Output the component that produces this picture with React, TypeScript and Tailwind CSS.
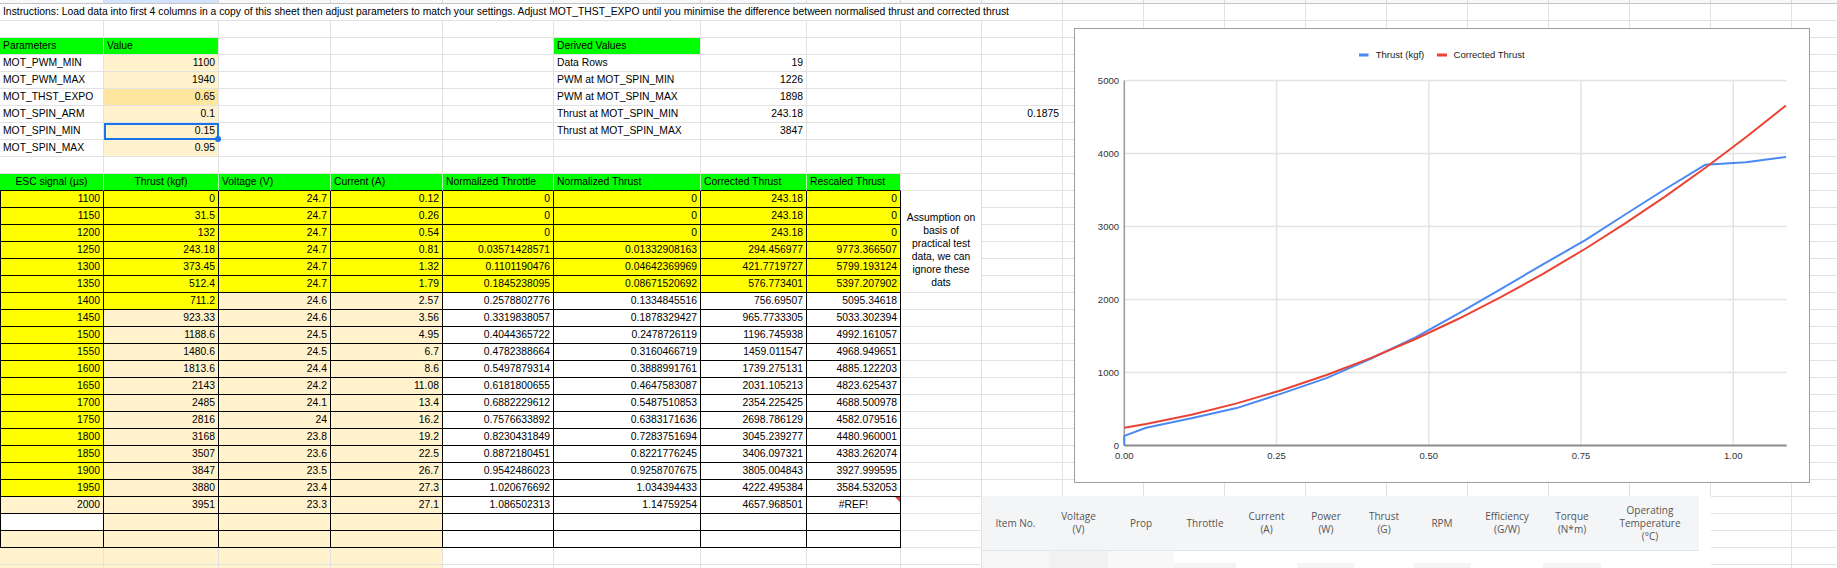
import React from 'react';

type Spec = {
  t?: React.ReactNode;
  a?: 'l' | 'r' | 'c';
  bg?: string;
  b?: string;
  extra?: string;
  child?: React.ReactNode;
};

const GL = 'border-[#e2e2e2]';
const BLK = 'border-black';
const Y = 'bg-[#ffff00]';
const BE = 'bg-[#fff2cc]';
const G = 'bg-[#00ff00]';
const HB = 'border-r-[#b4f3b4] border-b-black';

const INSTR =
  'Instructions: Load data into first 4 columns in a copy of this sheet then adjust parameters to match your settings. Adjust MOT_THST_EXPO until you minimise the difference between normalised thrust and corrected thrust';

const DATA: string[][] = [
  ['1100', '0', '24.7', '0.12', '0', '0', '243.18', '0'],
  ['1150', '31.5', '24.7', '0.26', '0', '0', '243.18', '0'],
  ['1200', '132', '24.7', '0.54', '0', '0', '243.18', '0'],
  ['1250', '243.18', '24.7', '0.81', '0.03571428571', '0.01332908163', '294.456977', '9773.366507'],
  ['1300', '373.45', '24.7', '1.32', '0.1101190476', '0.04642369969', '421.7719727', '5799.193124'],
  ['1350', '512.4', '24.7', '1.79', '0.1845238095', '0.08671520692', '576.773401', '5397.207902'],
  ['1400', '711.2', '24.6', '2.57', '0.2578802776', '0.1334845516', '756.69507', '5095.34618'],
  ['1450', '923.33', '24.6', '3.56', '0.3319838057', '0.1878329427', '965.7733305', '5033.302394'],
  ['1500', '1188.6', '24.5', '4.95', '0.4044365722', '0.2478726119', '1196.745938', '4992.161057'],
  ['1550', '1480.6', '24.5', '6.7', '0.4782388664', '0.3160466719', '1459.011547', '4968.949651'],
  ['1600', '1813.6', '24.4', '8.6', '0.5497879314', '0.3888991761', '1739.275131', '4885.122203'],
  ['1650', '2143', '24.2', '11.08', '0.6181800655', '0.4647583087', '2031.105213', '4823.625437'],
  ['1700', '2485', '24.1', '13.4', '0.6882229612', '0.5487510853', '2354.225425', '4688.500978'],
  ['1750', '2816', '24', '16.2', '0.7576633892', '0.6383171636', '2698.786129', '4582.079516'],
  ['1800', '3168', '23.8', '19.2', '0.8230431849', '0.7283751694', '3045.239277', '4480.960001'],
  ['1850', '3507', '23.6', '22.5', '0.8872180451', '0.8221776245', '3406.097321', '4383.262074'],
  ['1900', '3847', '23.5', '26.7', '0.9542486023', '0.9258707675', '3805.004843', '3927.999595'],
  ['1950', '3880', '23.4', '27.3', '1.020676692', '1.034394433', '4222.495384', '3584.532053'],
  ['2000', '3951', '23.3', '27.1', '1.086502313', '1.14759254', '4657.968501', '#REF!'],
];

function cell(s: Spec, key: string) {
  const align = s.a === 'r' ? 'text-right' : s.a === 'c' ? 'text-center' : 'text-left';
  return (
    <div
      key={key}
      className={[
        'relative whitespace-nowrap px-[3px] leading-[16px] border-r border-b',
        s.b ?? GL,
        s.bg ?? '',
        align,
        s.extra ?? '',
      ].join(' ')}
    >
      {s.t}
      {s.child}
    </div>
  );
}

function pad(cells: Spec[], n: number) {
  const out = [...cells];
  while (out.length < n) out.push({});
  return out;
}

function Selection() {
  return (
    <div className="absolute left-0 top-0 -right-[1px] -bottom-[1px] z-10 border-2 border-[#1a73e8]">
      <div className="absolute -right-[4px] -bottom-[4px] h-[6px] w-[6px] rounded-full bg-[#1a73e8]" />
    </div>
  );
}

function RefFlag() {
  return (
    <div className="absolute right-0 top-0 h-0 w-0 border-l-[5px] border-t-[5px] border-l-transparent border-t-[#e53935]" />
  );
}

function buildSheet() {
  const items: React.ReactNode[] = [];
  let r = 0;
  const push = (cells: Spec[]) => {
    cells.forEach((c, i) => items.push(cell(c, `r${r}c${i}`)));
    r++;
  };

  for (let i = 0; i < 20; i++) {
    items.push(
      <div
        key={`h${i}`}
        className={[
          'border-r border-b border-r-[#dadada] border-b-[#c4c4c4]',
          i === 1 ? 'bg-[#d3e3fd]' : 'bg-[#f8f9fa]',
        ].join(' ')}
      />
    );
  }

  push(pad([{ t: INSTR, extra: 'col-span-10' }], 11));
  push(pad([], 20));
  push(pad([{ t: 'Parameters', bg: G }, { t: 'Value', bg: G }, {}, {}, {}, { t: 'Derived Values', bg: G }], 20));
  push(pad([{ t: 'MOT_PWM_MIN' }, { t: '1100', a: 'r', bg: BE }, {}, {}, {}, { t: 'Data Rows' }, { t: '19', a: 'r' }], 20));
  push(pad([{ t: 'MOT_PWM_MAX' }, { t: '1940', a: 'r', bg: BE }, {}, {}, {}, { t: 'PWM at MOT_SPIN_MIN' }, { t: '1226', a: 'r' }], 20));
  push(pad([{ t: 'MOT_THST_EXPO' }, { t: '0.65', a: 'r', bg: 'bg-[#ffe69f]' }, {}, {}, {}, { t: 'PWM at MOT_SPIN_MAX' }, { t: '1898', a: 'r' }], 20));
  push(pad([{ t: 'MOT_SPIN_ARM' }, { t: '0.1', a: 'r', bg: BE }, {}, {}, {}, { t: 'Thrust at MOT_SPIN_MIN' }, { t: '243.18', a: 'r' }, {}, {}, { t: '0.1875', a: 'r' }], 20));
  push(pad([{ t: 'MOT_SPIN_MIN' }, { t: '0.15', a: 'r', bg: BE, child: <Selection /> }, {}, {}, {}, { t: 'Thrust at MOT_SPIN_MAX' }, { t: '3847', a: 'r' }], 20));
  push(pad([{ t: 'MOT_SPIN_MAX' }, { t: '0.95', a: 'r', bg: BE }], 20));
  push(pad([], 20));
  push(
    pad(
      [
        { t: 'ESC signal (µs)', a: 'c', bg: G, b: HB },
        { t: 'Thrust (kgf)', a: 'c', bg: G, b: HB },
        { t: 'Voltage (V)', bg: G, b: HB },
        { t: 'Current (A)', bg: G, b: HB },
        { t: 'Normalized Throttle', bg: G, b: HB },
        { t: 'Normalized Thrust', bg: G, b: HB },
        { t: 'Corrected Thrust', bg: G, b: HB },
        { t: 'Rescaled Thrust', bg: G, b: 'border-r-[#e2e2e2] border-b-black' },
      ],
      20
    )
  );

  DATA.forEach((row, i) => {
    const cells: Spec[] = row.map((v, j) => {
      let bg = '';
      if (j === 0) bg = i < 18 ? Y : BE;
      else if (j === 1) bg = i <= 6 ? Y : BE;
      else if (j <= 3) bg = i <= 5 ? Y : BE;
      else bg = i <= 5 ? Y : '';
      const isRef = v === '#REF!';
      return {
        t: v,
        a: isRef ? 'c' : 'r',
        bg,
        b: BLK,
        extra: j === 0 ? 'border-l' : '',
        child: isRef ? <RefFlag /> : undefined,
      } as Spec;
    });
    cells.forEach((c, k) => items.push(cell(c, `d${i}c${k}`)));
    if (i === 0) {
      items.push(
        <div
          key="merged"
          className="row-span-6 flex items-end justify-center border-r border-b border-[#e2e2e2] bg-white px-[3px] pb-[3px] text-center"
        >
          <span className="leading-[13px]">
            Assumption on
            <br />
            basis of
            <br />
            practical test
            <br />
            data, we can
            <br />
            ignore these
            <br />
            dats
          </span>
        </div>
      );
    } else if (i > 5) {
      items.push(cell({}, `d${i}I`));
    }
    for (let k = 0; k < 11; k++) items.push(cell({}, `d${i}x${k}`));
    r++;
  });

  push(
    pad(
      [
        { b: BLK, extra: 'border-l' },
        { b: BLK, bg: BE },
        { b: BLK, bg: BE },
        { b: BLK, bg: BE },
        { b: BLK },
        { b: BLK },
        { b: BLK },
        { b: BLK },
      ],
      20
    )
  );
  push(
    pad(
      [
        { b: BLK, bg: BE, extra: 'border-l' },
        { b: BLK, bg: BE },
        { b: BLK, bg: BE },
        { b: BLK, bg: BE },
        { b: BLK },
        { b: BLK },
        { b: BLK },
        { b: BLK },
      ],
      20
    )
  );
  push(pad([{ bg: BE }, { bg: BE }, { bg: BE }, { bg: BE }], 20));
  push(pad([{ bg: BE }, { bg: BE }, { bg: BE }, { bg: BE }], 20));
  return items;
}

const TP: [number, number][] = DATA.map((d) => [parseFloat(d[4]), parseFloat(d[1])]);
const CP: [number, number][] = DATA.map((d) => [parseFloat(d[4]), parseFloat(d[6])]);

const tx = (t: number) => 49.3 + 609 * t;
const ty = (v: number) => 416.5 - 0.073 * v;
const toPath = (pts: [number, number][]) =>
  pts.map((p, i) => `${i ? 'L' : 'M'}${tx(p[0]).toFixed(2)} ${ty(p[1]).toFixed(2)}`).join(' ');

function Chart() {
  const font = '"Liberation Sans", Arial, sans-serif';
  return (
    <div className="absolute left-[1074px] top-[28px] z-20 h-[455px] w-[736px] border border-[#9e9e9e] bg-white">
      <svg width={734} height={453} className="block" fontFamily={font} fontSize={9.5}>
        {[1000, 2000, 3000, 4000, 5000].map((v) => (
          <line key={v} x1={49.3} x2={711.7} y1={ty(v)} y2={ty(v)} stroke="#e4e4e4" strokeWidth={1.5} />
        ))}
        {[0.25, 0.5, 0.75, 1].map((t) => (
          <line key={t} x1={tx(t)} x2={tx(t)} y1={ty(5000)} y2={ty(0)} stroke="#e4e4e4" strokeWidth={1.5} />
        ))}
        <line x1={49.3} x2={49.3} y1={ty(5000)} y2={ty(0)} stroke="#9a9a9a" strokeWidth={1.5} />
        <line x1={49.3} x2={711.7} y1={ty(0)} y2={ty(0)} stroke="#8c8c8c" strokeWidth={2} />
        {[0, 1000, 2000, 3000, 4000, 5000].map((v) => (
          <text key={v} x={44} y={ty(v) + 3.4} textAnchor="end" fill="#333">
            {v}
          </text>
        ))}
        {['0.00', '0.25', '0.50', '0.75', '1.00'].map((s, i) => (
          <text key={s} x={tx(i * 0.25)} y={430.2} textAnchor="middle" fill="#333">
            {s}
          </text>
        ))}
        <path d={toPath(TP)} fill="none" stroke="#4a89f3" strokeWidth={2} strokeLinejoin="round" />
        <path d={toPath(CP)} fill="none" stroke="#ea4335" strokeWidth={2} strokeLinejoin="round" />
        <rect x={284} y={24.5} width={9.5} height={3} fill="#4a89f3" />
        <text x={300.7} y={29.4} fill="#222">
          Thrust (kgf)
        </text>
        <rect x={362} y={24.5} width={10} height={3} fill="#ea4335" />
        <text x={378.6} y={29.4} fill="#222">
          Corrected Thrust
        </text>
      </svg>
    </div>
  );
}

const SPEC_COLS: { w: string; lines: string[] }[] = [
  { w: 'w-[67px]', lines: ['Item No.'] },
  { w: 'w-[59px]', lines: ['Voltage', '(V)'] },
  { w: 'w-[66px]', lines: ['Prop'] },
  { w: 'w-[62px]', lines: ['Throttle'] },
  { w: 'w-[61px]', lines: ['Current', '(A)'] },
  { w: 'w-[58px]', lines: ['Power', '(W)'] },
  { w: 'w-[58px]', lines: ['Thrust', '(G)'] },
  { w: 'w-[58px]', lines: ['RPM'] },
  { w: 'w-[72px]', lines: ['Efficiency', '(G/W)'] },
  { w: 'w-[58px]', lines: ['Torque', '(N*m)'] },
  { w: 'w-[98px]', lines: ['Operating', 'Temperature', '(°C)'] },
];

const BODY_SHADE = [
  'bg-[#f6f6f6]',
  'bg-[#f1f1f1]',
  'bg-[#f8f8f8]',
  'bg-[linear-gradient(to_bottom,#ffffff_12px,#f5f5f5_12px)]',
  'bg-white',
  'bg-[linear-gradient(to_bottom,#ffffff_12px,#f5f5f5_12px)]',
  'bg-white',
  'bg-[linear-gradient(to_bottom,#ffffff_12px,#f5f5f5_12px)]',
  'bg-white',
  'bg-[linear-gradient(to_bottom,#ffffff_12px,#f5f5f5_12px)]',
  'bg-white',
];

function SpecTable() {
  return (
    <div className="absolute left-[982px] top-[496px] z-20 h-[72px] w-[729px] bg-white font-['Open_Sans',sans-serif] text-[10px] text-[#555]">
      <div className="flex h-[55px] w-[717px] border-b border-[#e3e5e8] bg-[#f4f5f7]">
        {SPEC_COLS.map((c) => (
          <div key={c.lines[0]} className={`${c.w} flex flex-col items-center justify-center text-center leading-[13px]`}>
            {c.lines.map((l) => (
              <span key={l}>{l}</span>
            ))}
          </div>
        ))}
      </div>
      <div className="flex h-[17px] w-[717px]">
        {SPEC_COLS.map((c, i) => (
          <div key={c.lines[0]} className={`${c.w} h-full ${BODY_SHADE[i]}`} />
        ))}
      </div>
    </div>
  );
}

export default function App() {
  return (
    <div className="relative h-[568px] w-[1837px] overflow-hidden bg-white font-['Liberation_Sans',Arial,sans-serif] text-[10.35px] text-black">
      <div className="grid grid-cols-[104px_115px_112px_112px_111px_147px_106px_94px_repeat(12,81px)] grid-rows-[4px] auto-rows-[17px]">
        {buildSheet()}
      </div>
      <Chart />
      <SpecTable />
    </div>
  );
}
